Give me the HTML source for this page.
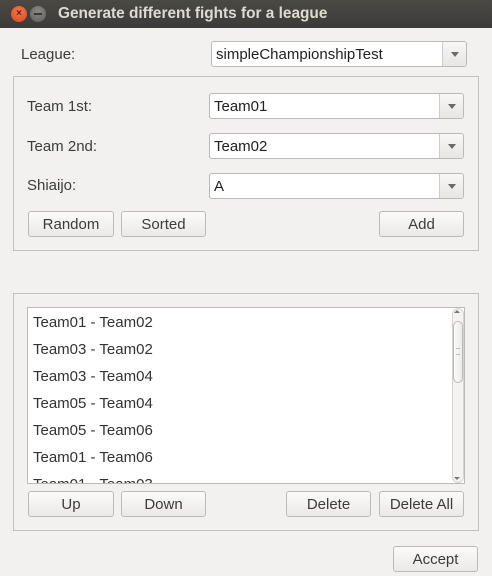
<!DOCTYPE html>
<html><head><meta charset="utf-8"><style>
*{box-sizing:border-box;margin:0;padding:0}
body{width:492px;height:576px;background:#f2f1f0;font-family:"Liberation Sans","DejaVu Sans",sans-serif;font-size:15px;color:#3c3c3c;position:relative;overflow:hidden}
.a{position:absolute}
.title{left:0;top:0;width:492px;height:28px;background:linear-gradient(#4a4944,#3c3b37);color:#dfdbd2;font-weight:bold;font-size:15.4px;line-height:28px;padding-left:58px}
.cl{left:11px;top:6px;width:16px;height:16px;border-radius:50%;background:radial-gradient(circle at 50% 35%,#f5784a,#d9471c);color:#5a2010;font-size:10px;line-height:16px;text-align:center;font-weight:bold}
.mn{left:30px;top:6px;width:16px;height:16px;border-radius:50%;background:radial-gradient(circle at 50% 35%,#8a8984,#5f5e5a);}
.mn:after{content:"";position:absolute;left:4px;top:7px;width:8px;height:2px;background:#3a3935}
.frame{border:1px solid #c3c1bd}
.combo{height:26px;background:#fff;border:1px solid #bdbab5;border-radius:3px;padding-left:4px;line-height:25px;color:#222;font-size:15px}
.combo .ar{position:absolute;right:0;top:0;width:24px;height:24px;border-left:1px solid #d0cdc8;background:linear-gradient(#f8f7f6,#e8e6e3);border-radius:0 3px 3px 0}
.combo .ar:after{content:"";position:absolute;left:8px;top:10px;border-left:4px solid transparent;border-right:4px solid transparent;border-top:5px solid #6b6a66}
.btn{height:26px;border:1px solid #bdbab5;border-radius:3px;background:linear-gradient(#fbfbfa,#ebe9e7);text-align:center;line-height:25px;color:#3c3c3c;font-size:15px}
.lbl{font-size:15px;color:#3c3c3c}
.list{left:27px;top:307px;width:438px;height:177px;background:#fff;border:1px solid #bdbab5;overflow:hidden}
.row{position:absolute;left:5px;font-size:15px;color:#333}
</style></head><body>
<div class="a title">Generate different fights for a league</div>
<div class="a cl">×</div><div class="a mn"></div>

<div class="a lbl" style="left:21px;top:46px">League:</div>
<div class="a combo" style="left:211px;top:41px;width:256px">simpleChampionshipTest<div class="ar"></div></div>

<div class="a frame" style="left:13px;top:76px;width:466px;height:175px"></div>
<div class="a lbl" style="left:27px;top:98px">Team 1st:</div>
<div class="a combo" style="left:209px;top:93px;width:255px">Team01<div class="ar"></div></div>
<div class="a lbl" style="left:27px;top:138px">Team 2nd:</div>
<div class="a combo" style="left:209px;top:133px;width:255px">Team02<div class="ar"></div></div>
<div class="a lbl" style="left:27px;top:177px">Shiaijo:</div>
<div class="a combo" style="left:209px;top:173px;width:255px">A<div class="ar"></div></div>
<div class="a btn" style="left:28px;top:211px;width:86px">Random</div>
<div class="a btn" style="left:121px;top:211px;width:85px">Sorted</div>
<div class="a btn" style="left:379px;top:211px;width:85px">Add</div>

<div class="a frame" style="left:13px;top:293px;width:466px;height:238px"></div>
<div class="a list">
<div class="row" style="top:6px">Team01 - Team02</div>
<div class="row" style="top:33px">Team03 - Team02</div>
<div class="row" style="top:60px">Team03 - Team04</div>
<div class="row" style="top:87px">Team05 - Team04</div>
<div class="row" style="top:114px">Team05 - Team06</div>
<div class="row" style="top:141px">Team01 - Team06</div>
<div class="row" style="top:168px">Team01 - Team03</div>
</div>
<div class="a" style="left:452px;top:308px;width:12px;height:175px;background:#f4f3f2;border:1px solid #d6d4d0;border-radius:6px"></div>
<div class="a" style="left:454px;top:310px;border-left:3px solid transparent;border-right:3px solid transparent;border-bottom:3px solid #777"></div>
<div class="a" style="left:453px;top:321px;width:10px;height:62px;background:linear-gradient(90deg,#fafafa,#ecebe9);border:1px solid #bdbab5;border-radius:5px"></div>
<div class="a" style="left:456px;top:348px;width:4px;height:7px;border-top:1px solid #bbb;border-bottom:1px solid #bbb"></div>
<div class="a" style="left:454px;top:477px;border-left:3px solid transparent;border-right:3px solid transparent;border-top:3px solid #777"></div>

<div class="a btn" style="left:28px;top:491px;width:86px">Up</div>
<div class="a btn" style="left:121px;top:491px;width:85px">Down</div>
<div class="a btn" style="left:286px;top:491px;width:85px">Delete</div>
<div class="a btn" style="left:379px;top:491px;width:85px">Delete All</div>
<div class="a btn" style="left:393px;top:546px;width:85px">Accept</div>
</body></html>
